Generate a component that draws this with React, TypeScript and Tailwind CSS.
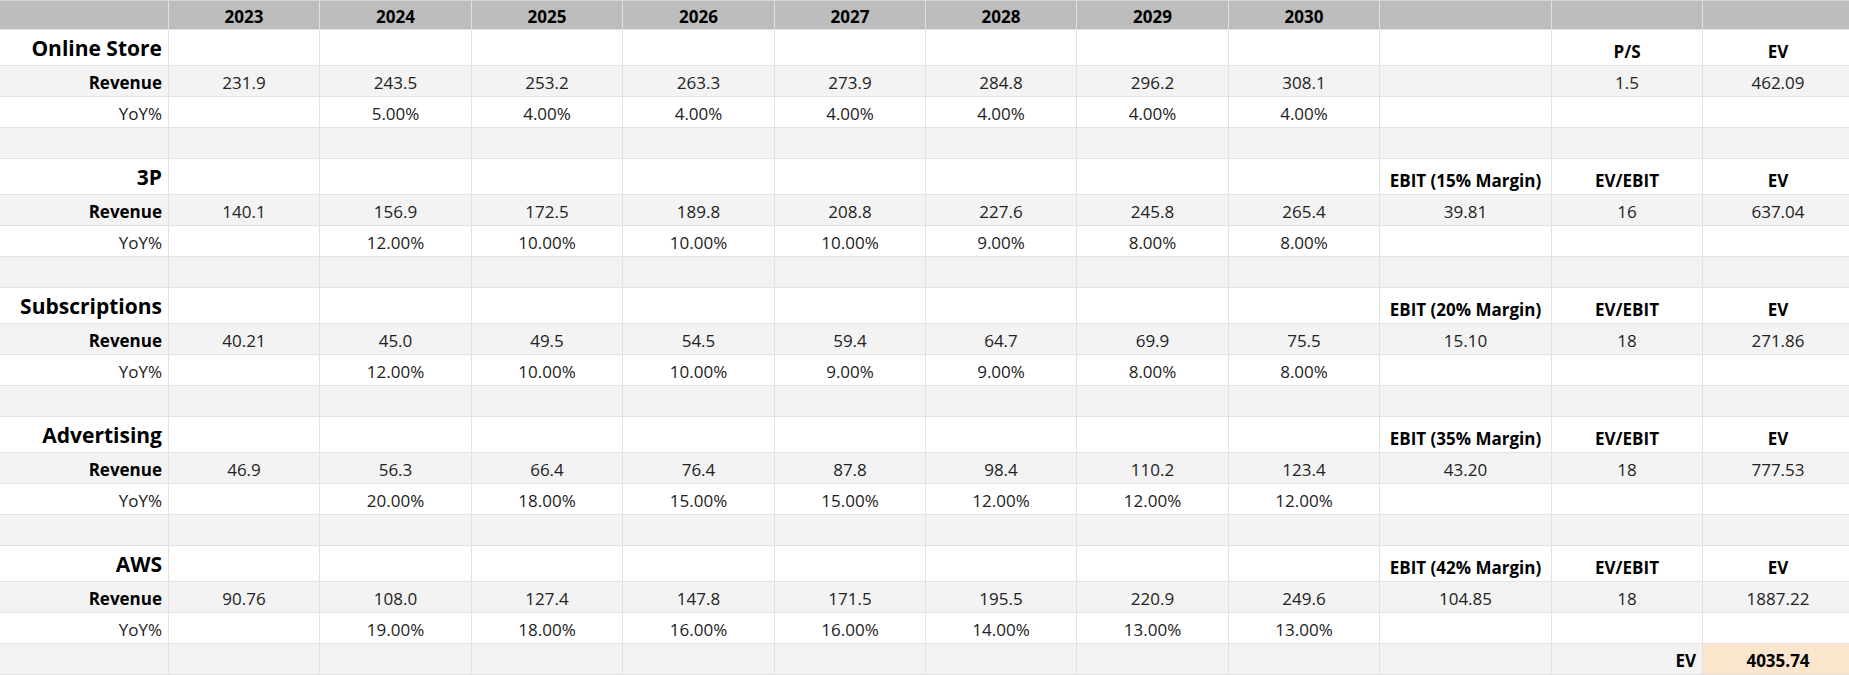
import React from 'react';

interface Segment {
  name: string;
  revenue: string[];
  yoy: string[];
  extraHead: [string, string, string];
  extraVals: [string, string, string];
}

const years = ['2023', '2024', '2025', '2026', '2027', '2028', '2029', '2030'];

const segments: Segment[] = [
  {
    name: 'Online Store',
    revenue: ['231.9', '243.5', '253.2', '263.3', '273.9', '284.8', '296.2', '308.1'],
    yoy: ['', '5.00%', '4.00%', '4.00%', '4.00%', '4.00%', '4.00%', '4.00%'],
    extraHead: ['', 'P/S', 'EV'],
    extraVals: ['', '1.5', '462.09'],
  },
  {
    name: '3P',
    revenue: ['140.1', '156.9', '172.5', '189.8', '208.8', '227.6', '245.8', '265.4'],
    yoy: ['', '12.00%', '10.00%', '10.00%', '10.00%', '9.00%', '8.00%', '8.00%'],
    extraHead: ['EBIT (15% Margin)', 'EV/EBIT', 'EV'],
    extraVals: ['39.81', '16', '637.04'],
  },
  {
    name: 'Subscriptions',
    revenue: ['40.21', '45.0', '49.5', '54.5', '59.4', '64.7', '69.9', '75.5'],
    yoy: ['', '12.00%', '10.00%', '10.00%', '9.00%', '9.00%', '8.00%', '8.00%'],
    extraHead: ['EBIT (20% Margin)', 'EV/EBIT', 'EV'],
    extraVals: ['15.10', '18', '271.86'],
  },
  {
    name: 'Advertising',
    revenue: ['46.9', '56.3', '66.4', '76.4', '87.8', '98.4', '110.2', '123.4'],
    yoy: ['', '20.00%', '18.00%', '15.00%', '15.00%', '12.00%', '12.00%', '12.00%'],
    extraHead: ['EBIT (35% Margin)', 'EV/EBIT', 'EV'],
    extraVals: ['43.20', '18', '777.53'],
  },
  {
    name: 'AWS',
    revenue: ['90.76', '108.0', '127.4', '147.8', '171.5', '195.5', '220.9', '249.6'],
    yoy: ['', '19.00%', '18.00%', '16.00%', '16.00%', '14.00%', '13.00%', '13.00%'],
    extraHead: ['EBIT (42% Margin)', 'EV/EBIT', 'EV'],
    extraVals: ['104.85', '18', '1887.22'],
  },
];

const gridCols =
  'grid grid-cols-[169px_151px_152px_151px_152px_151px_151px_152px_151px_172px_151px_151px]';

// spreadsheet cell: bottom-aligned text, grid lines on right and bottom
const Cell: React.FC<{
  children?: React.ReactNode;
  className?: string;
}> = ({ children, className = '' }) => (
  <div
    className={`flex items-end border-r border-b border-[#e2e2e2] px-[6px] leading-none whitespace-nowrap overflow-hidden ${className}`}
  >
    {children}
  </div>
);

const Row: React.FC<{ children: React.ReactNode; className?: string }> = ({
  children,
  className = '',
}) => <div className={`${gridCols} ${className}`}>{children}</div>;

export default function App() {
  return (
    <div
      className="w-full h-[675px] overflow-hidden bg-white text-[17px] text-[#222]"
      style={{ fontFamily: '"Open Sans", "Liberation Sans", sans-serif' }}
    >
      {/* Header */}
      <Row className="h-[30px] bg-[#bdbdbd] border-t border-[#d6d6d6] font-bold text-black">
        <Cell className="border-[#b0b0b0] pb-[4px]" />
        {years.map((y) => (
          <Cell key={y} className="border-[#b0b0b0] justify-center pb-[4px]">
            {y}
          </Cell>
        ))}
        <Cell className="border-[#b0b0b0]" />
        <Cell className="border-[#b0b0b0]" />
        <Cell className="border-[#b0b0b0]" />
      </Row>

      {segments.map((s, i) => (
        <React.Fragment key={s.name}>
          {/* Segment title */}
          <Row className="h-[36px] bg-white font-bold text-black">
            <Cell className="justify-end text-[21px] pb-[6px]">{s.name}</Cell>
            {years.map((y) => (
              <Cell key={y} />
            ))}
            {s.extraHead.map((h, k) => (
              <Cell key={k} className="justify-center pb-[5px]">
                {h}
              </Cell>
            ))}
          </Row>

          {/* Revenue */}
          <Row className="h-[31px] bg-[#f3f3f3]">
            <Cell className="justify-end font-bold text-black pb-[5px]">Revenue</Cell>
            {s.revenue.map((v, k) => (
              <Cell key={k} className="justify-center pb-[5px]">
                {v}
              </Cell>
            ))}
            {s.extraVals.map((v, k) => (
              <Cell key={k} className="justify-center pb-[5px]">
                {v}
              </Cell>
            ))}
          </Row>

          {/* YoY */}
          <Row className="h-[31px] bg-white">
            <Cell className="justify-end pb-[5px]">YoY%</Cell>
            {s.yoy.map((v, k) => (
              <Cell key={k} className="justify-center pb-[5px]">
                {v}
              </Cell>
            ))}
            <Cell />
            <Cell />
            <Cell />
          </Row>

          {/* Spacer / total row */}
          {i < segments.length - 1 ? (
            <Row className="h-[31px] bg-[#f3f3f3]">
              {Array.from({ length: 12 }).map((_, k) => (
                <Cell key={k} />
              ))}
            </Row>
          ) : (
            <Row className="h-[31px] bg-[#f3f3f3]">
              {Array.from({ length: 10 }).map((_, k) => (
                <Cell key={k} />
              ))}
              <Cell className="justify-end font-bold text-black pb-[5px]">EV</Cell>
              <Cell className="justify-center font-bold text-black bg-[#fce5cd] pb-[5px]">
                4035.74
              </Cell>
            </Row>
          )}
        </React.Fragment>
      ))}
    </div>
  );
}
